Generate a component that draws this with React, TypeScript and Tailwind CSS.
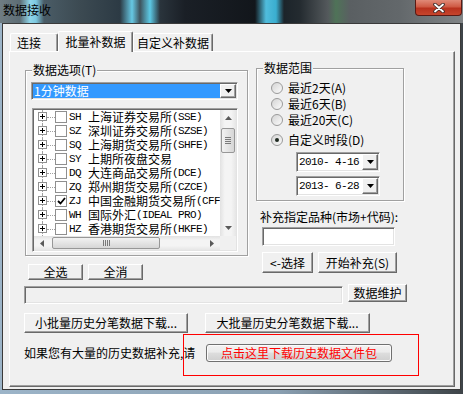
import React from "react";

const raised =
  "bg-[#f0f0f0] border border-t-white border-l-white border-r-[#696969] border-b-[#696969] shadow-[inset_-1px_-1px_0_#a0a0a0]";
const sunken =
  "border border-t-[#a0a0a0] border-l-[#a0a0a0] border-r-white border-b-white shadow-[inset_1px_1px_0_#696969,inset_-1px_-1px_0_#e3e3e3]";
const etched = "border border-[#a0a0a0] shadow-[inset_1px_1px_0_#fff,1px_1px_0_#fff]";
const mono = "font-[family-name:'Liberation_Mono',monospace] text-[11px] tracking-[-0.6px] whitespace-pre";

const Arrow = ({ dir, color = "#000" }: { dir: "up" | "down" | "left" | "right"; color?: string }) => {
  const vertical = dir === "up" || dir === "down";
  const d = {
    down: "M0 0h7L3.5 4z",
    up: "M0 4h7L3.5 0z",
    left: "M4 0v7L0 3.5z",
    right: "M0 0v7L4 3.5z",
  }[dir];
  return (
    <svg width={vertical ? 7 : 4} height={vertical ? 4 : 7} viewBox={vertical ? "0 0 7 4" : "0 0 4 7"}>
      <path d={d} fill={color} />
    </svg>
  );
};

const Group = ({ label, className, children }: { label: string; className: string; children: React.ReactNode }) => (
  <div className={`relative ${etched} ${className}`}>
    <span className="absolute -top-[8px] left-[6px] bg-[#f0f0f0] px-[1px] leading-[14px]">{label}</span>
    {children}
  </div>
);

const Radio = ({ label, checked }: { label: string; checked?: boolean }) => (
  <div className="flex items-center h-[16px] pl-[14px]">
    <span className="w-[12px] h-[12px] rounded-full border border-[#9a9a9a] bg-[linear-gradient(135deg,#d4d4d4,#fbfbfb)] flex items-center justify-center">
      {checked && <span className="w-[4px] h-[4px] rounded-full bg-[#1e2a20]" />}
    </span>
    <span className="ml-[5px] leading-[16px]">{label}</span>
  </div>
);

const DateBox = ({ value, className }: { value: string; className: string }) => (
  <div className={`${sunken} bg-white p-[1px] w-[84px] h-[20px] flex ${className}`}>
    <span className={`flex-1 pl-[1px] leading-[16px] ${mono}`}>{value}</span>
    <span className={`${raised} w-[16px] flex items-center justify-center`}>
      <Arrow dir="down" />
    </span>
  </div>
);

const rows: [string, string, string, boolean?][] = [
  ["SH", "上海证券交易所", "(SSE)"],
  ["SZ", "深圳证券交易所", "(SZSE)"],
  ["SQ", "上海期货交易所", "(SHFE)"],
  ["SY", "上期所夜盘交易", ""],
  ["DQ", "大连商品交易所", "(DCE)"],
  ["ZQ", "郑州期货交易所", "(CZCE)"],
  ["ZJ", "中国金融期货交易所", "(CFFEX)", true],
  ["WH", "国际外汇", "(IDEAL PRO)"],
  ["HZ", "香港期货交易所", "(HKFE)"],
  ["SG", "新加坡期货交易所", "(SGX)"],
];

const ListRow = ({ code, name, en, checked }: { code: string; name: string; en: string; checked?: boolean }) => (
  <div className="flex items-center w-max h-[14px] pl-[4px] whitespace-nowrap">
    <div className="shrink-0 flex flex-col items-center w-[9px] h-[14px]">
      <div className="h-[2px] border-l border-dotted border-[#a0a0a0]" />
      <div className="w-[9px] h-[9px] border border-[#919191] bg-white flex items-center justify-center">
        <svg width="5" height="5" viewBox="0 0 5 5">
          <path d="M0 2.5h5M2.5 0v5" stroke="#000" strokeWidth="1" />
        </svg>
      </div>
      <div className="flex-1 border-l border-dotted border-[#a0a0a0]" />
    </div>
    <div className="shrink-0 w-[8px] border-t border-dotted border-[#a0a0a0]" />
    <div className="shrink-0 w-[12px] h-[12px] border border-[#8f8f8f] bg-white flex items-center justify-center">
      {checked && (
        <svg width="9" height="8" viewBox="0 0 9 8">
          <path d="M1 4l2.5 2.5L8 1" stroke="#000" strokeWidth="1.8" fill="none" />
        </svg>
      )}
    </div>
    <span className={`shrink-0 ml-[2px] w-[19px] ${mono}`}>{code}</span>
    <span className="shrink-0 leading-[14px]">{name}</span>
    <span className={`shrink-0 ${mono}`}>{en}</span>
  </div>
);

const vTrack = "bg-[linear-gradient(90deg,#e2e2e2,#f4f4f4_30%,#f4f4f4_70%,#e6e6e6)]";
const hTrack = "bg-[linear-gradient(180deg,#e2e2e2,#f4f4f4_30%,#f4f4f4_70%,#e6e6e6)]";

const App = () => {
  return (
    <div className="w-[463px] h-[394px] overflow-hidden flex flex-col text-[12px] text-black font-[family-name:'Noto_Sans_CJK_SC',sans-serif] bg-[linear-gradient(90deg,#9cb4c8,#8aa0b2_60%,#3e4448)]">
      {/* title bar */}
      <div className="h-[23px] shrink-0 flex items-start justify-between bg-[linear-gradient(90deg,#6f7c82_0px,#5d6d75_20px,#8fd6ea_30px,#7cc8e0_36px,#4a5c66_44px,#3c4a52_80px,#2c3a44_120px,#66c8e4_132px,#3e525c_140px,#5ccae6_150px,#2a343c_160px,#1a1f26_185px,#12161b_255px,#50bcdc_266px,#3aaed0_276px,#1c242a_284px,#242b30_300px,#54595c_328px,#4f7358_336px,#5a5f62_350px,#63686b_400px,#808486_463px)]">
        <span className="pl-[3px] pt-[2px] leading-[16px]">数据接收</span>
        <div className="mr-[1px] w-[47px] h-[16px] rounded-b-[4px] border border-t-0 border-[#5a1a14] bg-[linear-gradient(180deg,#e08a78,#cf5a44_45%,#b8321e_55%,#c6452c)] flex items-center justify-center">
          <svg width="12" height="10" viewBox="0 0 12 10">
            <path d="M2 1.5l8 7M10 1.5l-8 7" stroke="#3a2a28" strokeWidth="3.6" strokeLinecap="round" />
            <path d="M2 1.5l8 7M10 1.5l-8 7" stroke="#fff" strokeWidth="1.8" strokeLinecap="round" />
          </svg>
        </div>
      </div>

      {/* client */}
      <div className="mx-[2px] h-[367px] shrink-0 border border-[#3a3a3a] bg-[#f0f0f0] flex flex-col">
        {/* tabs */}
        <div className="flex items-end h-[20px] mt-[7px] ml-[7px]">
          <div className="w-[48px] h-[18px] pl-[6px] leading-[17px] rounded-t-[2px] border border-b-0 border-t-white border-l-white border-r-[#696969] shadow-[inset_-1px_0_0_#a0a0a0]">
            连接
          </div>
          <div className="relative z-10 -mb-[1px] w-[75px] h-[21px] text-center leading-[19px] rounded-t-[2px] bg-[#f0f0f0] border border-b-0 border-t-white border-l-white border-r-[#696969] shadow-[inset_-1px_0_0_#a0a0a0]">
            批量补数据
          </div>
          <div className="w-[80px] h-[18px] text-center leading-[17px] rounded-t-[2px] border border-b-0 border-t-white border-l-white border-r-[#696969] shadow-[inset_-1px_0_0_#a0a0a0]">
            自定义补数据
          </div>
        </div>

        {/* panel */}
        <div className={`ml-[6px] w-[446px] h-[336px] ${raised} pl-[14px] flex flex-col`}>
          <div className="flex items-start h-[228px]">
            {/* left column */}
            <div className="flex flex-col">
              <Group label="数据选项(T)" className="ml-[1px] mt-[18px] w-[223px] h-[186px]">
                <div className={`mt-[11px] ml-[5px] w-[207px] h-[18px] ${sunken} bg-white p-[1px] flex`}>
                  <span className="flex-1 bg-[#3399ff] text-white pl-[1px] leading-[14px]">1分钟数据</span>
                  <span className={`${raised} w-[16px] flex items-center justify-center`}>
                    <Arrow dir="down" />
                  </span>
                </div>
                <div className={`mt-[8px] ml-[6px] w-[206px] h-[144px] ${sunken} bg-white p-[1px] flex flex-col`}>
                  <div className="flex flex-1 min-h-0">
                    <div className="flex-1 min-w-0 overflow-hidden">
                      {rows.map(([code, name, en, checked]) => (
                        <ListRow key={code} code={code} name={name} en={en} checked={checked} />
                      ))}
                    </div>
                    <div className={`shrink-0 w-[16px] flex flex-col ${vTrack}`}>
                      <div className="h-[16px] flex items-center justify-center">
                        <Arrow dir="up" color="#5a5a5a" />
                      </div>
                      <div className="mt-[2px] mx-[1px] h-[25px] rounded-[2px] border border-[#979797] bg-[linear-gradient(90deg,#f2f2f2,#e4e4e4_50%,#d6d6d6)] flex flex-col items-center justify-center gap-[1px]">
                        <div className="w-[6px] h-[1px] bg-[#7a7a7a]" />
                        <div className="w-[6px] h-[1px] bg-[#7a7a7a]" />
                        <div className="w-[6px] h-[1px] bg-[#7a7a7a]" />
                        <div className="w-[6px] h-[1px] bg-[#7a7a7a]" />
                      </div>
                      <div className="flex-1" />
                      <div className="h-[16px] flex items-center justify-center">
                        <Arrow dir="down" color="#5a5a5a" />
                      </div>
                    </div>
                  </div>
                  <div className="shrink-0 h-[14px] flex">
                    <div className={`flex-1 flex items-stretch ${hTrack}`}>
                      <div className="w-[16px] flex items-center justify-center">
                        <Arrow dir="left" color="#5a5a5a" />
                      </div>
                      <div className="ml-[2px] my-[1px] w-[108px] rounded-[2px] border border-[#979797] bg-[linear-gradient(180deg,#f2f2f2,#e4e4e4_50%,#d6d6d6)] flex items-center justify-center gap-[1px]">
                        <div className="w-[1px] h-[6px] bg-[#7a7a7a]" />
                        <div className="w-[1px] h-[6px] bg-[#7a7a7a]" />
                        <div className="w-[1px] h-[6px] bg-[#7a7a7a]" />
                        <div className="w-[1px] h-[6px] bg-[#7a7a7a]" />
                      </div>
                      <div className="flex-1" />
                      <div className="w-[16px] flex items-center justify-center">
                        <Arrow dir="right" color="#5a5a5a" />
                      </div>
                    </div>
                    <div className="w-[16px] bg-[#f0f0f0]" />
                  </div>
                </div>
              </Group>
              <div className="mt-[8px] ml-[4px] flex gap-[5px]">
                <button className={`${raised} w-[55px] h-[16px] leading-[14px]`}>全选</button>
                <button className={`${raised} w-[55px] h-[16px] leading-[14px]`}>全消</button>
              </div>
            </div>

            {/* right column */}
            <div className="ml-[8px] flex flex-col">
              <Group label="数据范围" className="mt-[16px] w-[148px] h-[133px]">
                <div className="pt-[11px] flex flex-col">
                  <Radio label="最近2天(A)" />
                  <Radio label="最近6天(B)" />
                  <Radio label="最近20天(C)" />
                  <div className="mt-[4px]">
                    <Radio label="自定义时段(D)" checked />
                  </div>
                  <DateBox value="2010- 4-16" className="mt-[4px] ml-[39px]" />
                  <DateBox value="2013- 6-28" className="mt-[4px] ml-[39px]" />
                </div>
              </Group>
              <div className="mt-[8px] h-[16px] pl-[4px] leading-[16px] whitespace-nowrap">补充指定品种(市场+代码):</div>
              <div className={`mt-[2px] ml-[6px] w-[133px] h-[19px] ${sunken} bg-white`} />
              <div className="mt-[6px] ml-[6px] flex gap-[5px]">
                <button className={`${raised} w-[51px] h-[21px] leading-[19px]`}>&lt;-选择</button>
                <button className={`${raised} w-[79px] h-[21px] leading-[19px]`}>开始补充(S)</button>
              </div>
            </div>
          </div>

          {/* maintenance row */}
          <div className="mt-[4px] flex items-start">
            <div className={`mt-[2px] w-[319px] h-[18px] ${sunken} bg-[#f0f0f0]`} />
            <button className={`${raised} ml-[5px] w-[59px] h-[18px] leading-[16px]`}>数据维护</button>
          </div>

          {/* download buttons */}
          <div className="mt-[9px] flex">
            <button className={`${raised} w-[164px] h-[20px] leading-[18px]`}>小批量历史分笔数据下载...</button>
            <button className={`${raised} ml-[17px] w-[165px] h-[20px] leading-[18px]`}>大批量历史分笔数据下载...</button>
          </div>

          {/* package download */}
          <div className="relative mt-[1px] h-[42px] flex items-start">
            <span className="mt-[10px] w-[182px] leading-[18px] whitespace-nowrap">如果您有大量的历史数据补充,请</span>
            <button className="mt-[10px] w-[186px] h-[18px] leading-[16px] text-[#ff0000] rounded-[3px] border border-[#707070] bg-[linear-gradient(180deg,#f2f2f2_0%,#ebebeb_45%,#dddddd_50%,#cfcfcf_100%)] shadow-[inset_0_0_0_1px_#fbfbfb]">
              点击这里下载历史数据文件包
            </button>
            <div className="absolute left-[159px] top-0 w-[236px] h-[42px] border border-[#ff0000] pointer-events-none" />
          </div>
        </div>
      </div>
    </div>
  );
};

export default App;
